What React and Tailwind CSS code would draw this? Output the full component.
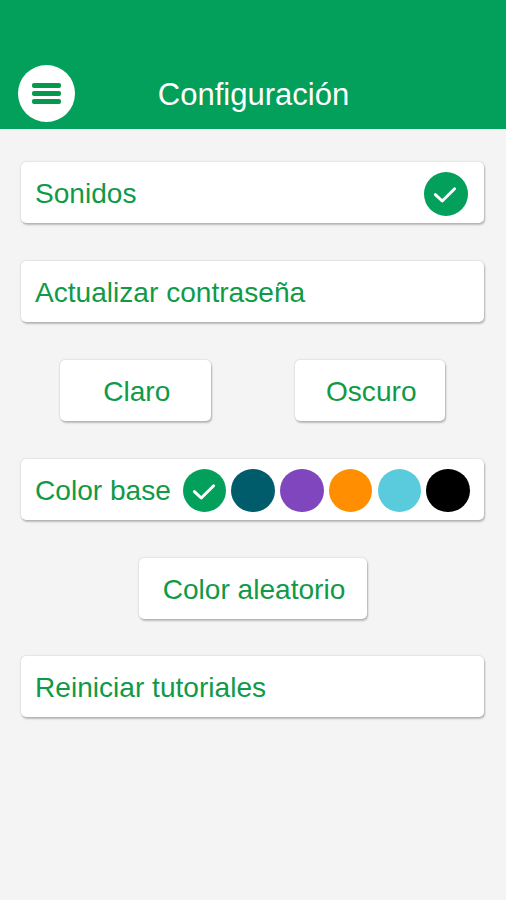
import React, { useState } from 'react';
import clsx from 'clsx';

const BASE_COLORS = [
  { id: 'verde', className: 'bg-[#02a05a]' },
  { id: 'petroleo', className: 'bg-[#005b6b]' },
  { id: 'morado', className: 'bg-[#8046bd]' },
  { id: 'naranja', className: 'bg-[#ff8f00]' },
  { id: 'celeste', className: 'bg-[#5acbdc]' },
  { id: 'negro', className: 'bg-black' },
];

const CheckMark = () => (
  <svg viewBox="0 0 44 44" className="w-full h-full" fill="none">
    <path d="M11.5 22.8 L18.4 29.3 L30.9 16.9" stroke="white" strokeWidth="3" strokeLinecap="round" strokeLinejoin="round" />
  </svg>
);

const Card = ({ as: Tag = 'div', className, children }) => (
  <Tag
    className={clsx(
      'flex items-center h-[61px] pt-[3px] rounded-[5px] bg-white text-[28.1px] leading-none text-[#109a48] whitespace-nowrap shadow-[0_0_2px_rgba(0,0,0,0.22),1px_2px_2px_rgba(0,0,0,0.22)]',
      className
    )}
  >
    {children}
  </Tag>
);

const Header = () => (
  <header className="grid grid-cols-[58px_1fr_58px] items-end h-[128.5px] px-[17.5px] pb-[6.5px] bg-[#02a05a]">
    <button aria-label="Menú" className="flex flex-col items-center justify-center gap-[3.6px] w-[57px] h-[57px] rounded-full bg-white">
      <span className="w-[29px] h-[4.8px] rounded-[2px] bg-[#079850]" />
      <span className="w-[29px] h-[4.8px] rounded-[2px] bg-[#079850]" />
      <span className="w-[29px] h-[4.8px] rounded-[2px] bg-[#079850]" />
    </button>
    <h1 className="flex items-center justify-center h-[57px] pt-[2px] pl-[1px] text-[31px] leading-none text-white">Configuración</h1>
  </header>
);

export default function App() {
  const [sounds, setSounds] = useState(true);
  const [baseColor, setBaseColor] = useState('verde');

  return (
    <div className="min-h-screen bg-[#f4f4f4] font-['Liberation_Sans',Arial,sans-serif]">
      <Header />
      <main className="flex flex-col gap-[37.9px] pt-[33.5px] pl-[21px] pr-[22px]">
        <Card className="justify-between pl-[14px] pr-[16.3px]">
          <span>Sonidos</span>
          <button
            aria-label="Sonidos"
            onClick={() => setSounds(!sounds)}
            className="w-[43.6px] h-[43.6px] rounded-full bg-[#02a05a]"
          >
            {sounds && <CheckMark />}
          </button>
        </Card>

        <Card as="button" className="pl-[14px]">Actualizar contraseña</Card>

        <div className="flex justify-between pl-[39px] pr-[39.5px]">
          <Card as="button" className="justify-center w-[150.5px] pl-[3px]">Claro</Card>
          <Card as="button" className="justify-center w-[149.5px] pl-[3px]">Oscuro</Card>
        </div>

        <Card className="justify-between pl-[14px] pr-[14px]">
          <span>Color base</span>
          <div className="flex gap-[5.2px]">
            {BASE_COLORS.map((color) => (
              <button
                key={color.id}
                aria-label={color.id}
                onClick={() => setBaseColor(color.id)}
                className={clsx('w-[43.6px] h-[43.6px] rounded-full', color.className)}
              >
                {baseColor === color.id && <CheckMark />}
              </button>
            ))}
          </div>
        </Card>

        <Card as="button" className="self-center justify-center w-[228px] pl-[3px]">Color aleatorio</Card>

        <Card as="button" className="pl-[14px]">Reiniciar tutoriales</Card>
      </main>
    </div>
  );
}
